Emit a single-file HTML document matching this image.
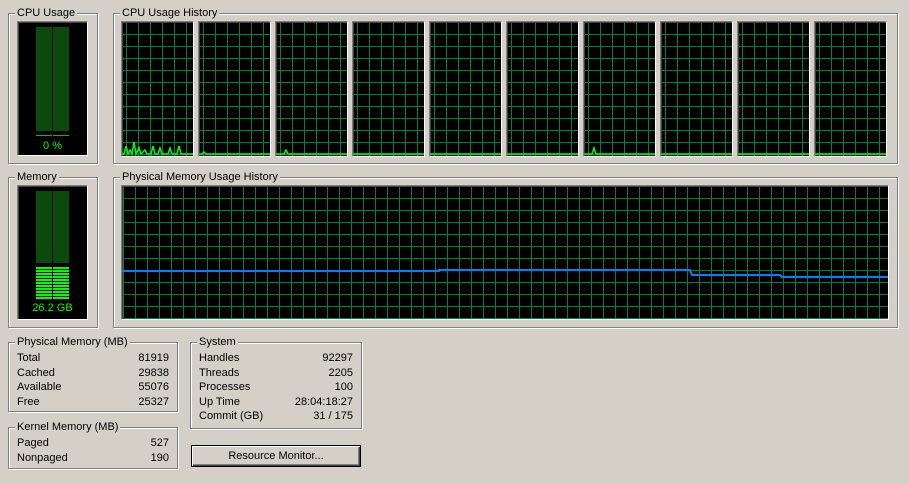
<!DOCTYPE html>
<html><head><style>
body{margin:0;width:909px;height:484px;background:#d4d0c8;position:relative;overflow:hidden;font-family:"Liberation Sans",sans-serif;font-size:11px;color:#000}
.g{position:absolute;border:1px solid #808080;box-shadow:1px 1px 0 #fff, inset 1px 1px 0 #fff}
.lbl{position:absolute;top:-7px;left:6px;background:#d4d0c8;padding:0 2px;line-height:13px}
.p{position:absolute;background:#000;border-top:1px solid #808080;border-left:1px solid #808080;border-right:1px solid #fff;border-bottom:1px solid #fff;box-shadow:inset 1px 1px 0 #404040}
.grid{background-color:#000;background-image:linear-gradient(90deg,#008040 1px,transparent 1px),linear-gradient(#008040 1px,transparent 1px);background-size:12px 12px}
.row{position:absolute;left:8px;right:8px;height:14px;line-height:14px}
.row span{float:right}
.dim{position:absolute;background:#0b4a0b}
.brt{position:absolute;background-image:repeating-linear-gradient(#00ff00 0 2px,#000 2px 3px);}
.t{position:absolute;color:#00ff00;font-size:11px;text-align:center;width:100%}
</style></head><body>

<div class="g" style="left:8px;top:13px;width:88px;height:149px"><div class="lbl">CPU Usage</div></div>
<div class="p" style="left:17px;top:21px;width:69px;height:133px">
 <div class="dim" style="left:18px;top:5px;width:16px;height:104px"></div>
 <div class="dim" style="left:35px;top:5px;width:16px;height:104px"></div>
 <div style="position:absolute;left:18px;top:113px;width:16px;height:1px;background:#00c000"></div>
 <div style="position:absolute;left:35px;top:113px;width:16px;height:1px;background:#00c000"></div>
 <div class="t" style="top:118px">0 %</div>
</div>

<div class="g" style="left:113px;top:13px;width:783px;height:149px"><div class="lbl">CPU Usage History</div></div>
<div id="cpus"></div>

<div class="g" style="left:8px;top:177px;width:88px;height:149px"><div class="lbl">Memory</div></div>
<div class="p" style="left:17px;top:185px;width:69px;height:133px">
 <div class="dim" style="left:18px;top:5px;width:16px;height:72px"></div>
 <div class="dim" style="left:35px;top:5px;width:16px;height:72px"></div>
 <div class="brt" style="left:18px;top:81px;width:16px;height:32px"></div>
 <div class="brt" style="left:35px;top:81px;width:16px;height:32px"></div>
 <div class="t" style="top:116px">26.2 GB</div>
</div>

<div class="g" style="left:113px;top:177px;width:783px;height:149px"><div class="lbl">Physical Memory Usage History</div></div>
<div class="p grid" style="left:121px;top:185px;width:766px;height:133px;background-position:1px 12px">
<svg width="766" height="133" style="position:absolute;left:0;top:0">
<polyline fill="none" stroke="#0080ff" stroke-width="2" points="0,85 317,85 317,84 568,84 570,89 658,89 660,91 766,91"/>
</svg></div>

<div class="g" style="left:8px;top:342px;width:168px;height:68px"><div class="lbl">Physical Memory (MB)</div>
<div class="row" style="top:8px">Total<span>81919</span></div>
<div class="row" style="top:23px">Cached<span>29838</span></div>
<div class="row" style="top:37px">Available<span>55076</span></div>
<div class="row" style="top:52px">Free<span>25327</span></div></div>

<div class="g" style="left:8px;top:427px;width:168px;height:40px"><div class="lbl">Kernel Memory (MB)</div>
<div class="row" style="top:8px">Paged<span>527</span></div>
<div class="row" style="top:23px">Nonpaged<span>190</span></div></div>

<div class="g" style="left:190px;top:342px;width:170px;height:85px"><div class="lbl">System</div>
<div class="row" style="top:8px">Handles<span>92297</span></div>
<div class="row" style="top:23px">Threads<span>2205</span></div>
<div class="row" style="top:37px">Processes<span>100</span></div>
<div class="row" style="top:52px">Up Time<span>28:04:18:27</span></div>
<div class="row" style="top:66px">Commit (GB)<span>31 / 175</span></div></div>

<div style="position:absolute;left:191px;top:445px;width:168px;height:20px;border:1px solid #000;box-shadow:inset 1px 1px 0 #fff,inset -1px -1px 0 #404040,inset -2px -2px 0 #808080;text-align:center;line-height:20px">Resource Monitor...</div>

<script>
var h='';
var spikes=[[0,'0,132 2,132 4,124 6,132 8,128 10,132 12,120 14,132 17,126 19,132 21,130 23,128 25,132 29,132 31,124 33,132 36,132 38,126 40,132 46,132 48,126 50,132 55,132 57,124 59,132 71,132'],[1,'0,132 3,132 5,130 7,132 71,132'],[2,'0,132 8,132 10,128 12,132 71,132'],[6,'0,132 8,132 10,126 12,132 71,132']];
for(var i=0;i<10;i++){
 var x=121+i*77;
 var pts='0,132 71,132';
 spikes.forEach(function(s){if(s[0]==i)pts=s[1];});
 h+='<div class="p grid" style="left:'+x+'px;top:21px;width:71px;height:134px;background-position:4px 12px"><svg width="71" height="134" style="position:absolute;left:0;top:0"><polyline fill="none" stroke="#00ff00" stroke-width="1.5" points="'+pts+'"/></svg></div>';
}
document.getElementById('cpus').outerHTML=h;
</script>
</body></html>
